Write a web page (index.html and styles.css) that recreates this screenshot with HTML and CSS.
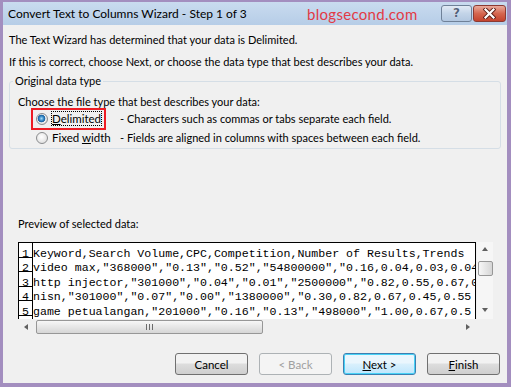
FILE: index.html
```html
<!DOCTYPE html>
<html lang="en">
<head>
    <meta charset="UTF-8">
    <title>Convert Text to Columns Wizard - Step 1 of 3</title>
    <link rel="stylesheet" href="styles.css">
</head>
<body>
    <div class="window">
        <div class="titlebar">
            <span class="title">Convert Text to Columns Wizard - Step 1 of 3</span>
            <span class="watermark">blogsecond.com</span>
            <div class="title-buttons">
                <div class="tb-btn help">?</div>
                <div class="tb-btn close">
                    <svg width="13" height="11" viewBox="0 0 13 11">
                        <path d="M2.5 1.5 L10.5 9.5 M10.5 1.5 L2.5 9.5" stroke="#5a1d16" stroke-width="4" stroke-linecap="square"/>
                        <path d="M2.5 1.5 L10.5 9.5 M10.5 1.5 L2.5 9.5" stroke="#fff" stroke-width="2.2" stroke-linecap="square"/>
                    </svg>
                </div>
            </div>
        </div>

        <div class="content">
            <p class="intro">The Text Wizard has determined that your data is Delimited.</p>
            <p class="intro">If this is correct, choose Next, or choose the data type that best describes your data.</p>

            <fieldset class="group">
                <legend>Original data type</legend>
                <p class="choose">Choose the file type that best describes your data:</p>
                <div class="option">
                    <div class="opt-box highlight">
                        <span class="radio checked"></span>
                        <span class="opt-label focused"><u>D</u>elimited</span>
                    </div>
                    <span class="opt-desc">- Characters such as commas or tabs separate each field.</span>
                </div>
                <div class="option">
                    <div class="opt-box">
                        <span class="radio"></span>
                        <span class="opt-label">Fixed <u>w</u>idth</span>
                    </div>
                    <span class="opt-desc">- Fields are aligned in columns with spaces between each field.</span>
                </div>
            </fieldset>

            <p class="preview-label">Preview of selected data:</p>

            <div class="preview-wrap">
                <div class="preview-main">
                    <div class="preview">
                        <div class="row"><span class="num">1</span><span class="data">Keyword,Search Volume,CPC,Competition,Number of Results,Trends</span></div>
                        <div class="row"><span class="num">2</span><span class="data">video max,"368000","0.13","0.52","54800000","0.16,0.04,0.03,0.04</span></div>
                        <div class="row"><span class="num">3</span><span class="data">http injector,"301000","0.04","0.01","2500000","0.82,0.55,0.67,0</span></div>
                        <div class="row"><span class="num">4</span><span class="data">nisn,"301000","0.07","0.00","1380000","0.30,0.82,0.67,0.45,0.55</span></div>
                        <div class="row"><span class="num">5</span><span class="data">game petualangan,"201000","0.16","0.13","498000","1.00,0.67,0.5</span></div>
                        <div class="row"><span class="num"></span><span class="data"></span></div>
                    </div>
                    <div class="hscroll">
                        <span class="arrow left"></span>
                        <div class="hthumb"><span class="grip"></span></div>
                        <span class="arrow right"></span>
                    </div>
                </div>
                <div class="vscroll">
                    <span class="arrow up"></span>
                    <div class="vthumb"></div>
                    <span class="arrow down"></span>
                </div>
            </div>

            <div class="buttons">
                <button class="btn">Cancel</button>
                <button class="btn" disabled>&lt; Back</button>
                <button class="btn default"><u>N</u>ext &gt;</button>
                <button class="btn"><u>F</u>inish</button>
            </div>
        </div>
    </div>
</body>
</html>
```

FILE: styles.css
```css
body {
    margin: 0;
    background: #a38ebf;
    font-family: Lato, "Noto Sans", sans-serif;
    font-size: 11px;
    color: #000;
}

.window {
    margin: 2px 4px 0 3px;
    width: 504px;
    height: 381px;
    background: #f0f0f0;
    display: flex;
    flex-direction: column;
}

/* title bar */
.titlebar {
    height: 23px;
    background: linear-gradient(#c9dbef, #b6cde7);
    display: flex;
    align-items: center;
    padding-left: 5px;
}

.title {
    width: 299px;
    font-size: 12px;
}

.watermark {
    color: #e23a45;
    font-size: 15px;
    letter-spacing: 0.3px;
}

.title-buttons {
    margin-left: auto;
    margin-right: 1px;
    margin-top: -1px;
    display: flex;
    gap: 1px;
}

.tb-btn {
    width: 31px;
    height: 17px;
    border: 1px solid #6f8198;
    border-radius: 3px;
    box-sizing: border-box;
    display: flex;
    align-items: center;
    justify-content: center;
}

.help {
    background: linear-gradient(#e1eaf5, #c3d4e8 50%, #b2c7e0);
    color: #53627a;
    font-family: "DejaVu Sans", sans-serif;
    font-weight: bold;
    font-size: 12px;
    text-shadow: 0 0 1px #fff;
}

.close {
    width: 33px;
    border-color: #8b3a33;
    background: linear-gradient(#e9aa9c, #d5664f 50%, #c4432e);
}

/* body */
.content {
    flex: 1;
    padding: 6px 6px 0;
    display: flex;
    flex-direction: column;
}

.intro {
    margin: 0 0 5px;
    line-height: 17px;
}

.group {
    margin: -2px 0 0;
    padding: 6px 0 1px 8px;
    border: 1px solid #d5dee6;
    border-radius: 3px;
    min-width: 0;
}

.group legend {
    line-height: 16px;
    padding: 0 2px;
    margin-left: -5px;
}

.choose {
    margin: 0;
    line-height: 14px;
}

.option {
    display: flex;
    align-items: center;
    height: 19px;
    white-space: nowrap;
}

.opt-box {
    display: flex;
    align-items: center;
    box-sizing: border-box;
    width: 75px;
    height: 22px;
    margin-left: 13px;
    margin-right: 14px;
    padding-left: 3px;
    border: 2px solid transparent;
    flex: none;
}

.opt-box.highlight {
    border-color: #ed1c24;
}

.radio {
    width: 12px;
    height: 12px;
    box-sizing: border-box;
    border-radius: 50%;
    border: 1px solid #8a8c8e;
    background: radial-gradient(circle at 45% 40%, #ffffff, #d8d8d8);
    margin-right: 4px;
    flex: none;
}

.radio.checked {
    background: radial-gradient(circle at 45% 45%, #a6dcf7 0, #2a7fc0 2.5px, #1b5f9c 3.5px, #f4f4f4 4.2px, #d6d6d6 6px);
}

.opt-label {
    font-size: 11.5px;
}

.opt-label.focused {
    outline: 1px dotted #000;
    outline-offset: 0;
}

.preview-label {
    margin: 67px 0 0 9px;
    line-height: 16px;
}

/* preview grid */
.preview-wrap {
    display: flex;
    margin: 10px 0 0 9px;
}

.preview-main {
    width: 458px;
}

.preview {
    height: 77px;
    box-sizing: border-box;
    border: 1px solid #000;
    border-bottom: none;
    overflow: hidden;
    background: #fff;
    font-family: "Liberation Mono", "Courier New", monospace;
    font-size: 11.6px;
}

.row {
    display: flex;
    height: 14.5px;
    white-space: nowrap;
}

.num, .data {
    box-sizing: border-box;
    padding-top: 5.5px;
    line-height: 9px;
}

.num {
    width: 14px;
    flex: none;
    text-align: center;
    border-right: 1px solid #000;
    border-bottom: 1px solid #000;
}

.hscroll {
    height: 15px;
    display: flex;
    align-items: center;
}

.hthumb {
    width: 227px;
    height: 14px;
    box-sizing: border-box;
    margin-left: 8px;
    border: 1px solid #979797;
    border-radius: 2px;
    background: linear-gradient(#f7f7f7, #e6e6e6 50%, #d6d6d6);
    display: flex;
    align-items: center;
    justify-content: center;
}

.grip {
    width: 5px;
    height: 6px;
    border-left: 1px solid #6b6b6b;
    border-right: 1px solid #6b6b6b;
    background: linear-gradient(90deg, transparent 2px, #6b6b6b 2px, #6b6b6b 3px, transparent 3px);
}

.arrow {
    width: 0;
    height: 0;
    border: 0 solid transparent;
    flex: none;
}

.arrow.left {
    border-width: 3.5px 4px 3.5px 0;
    border-right-color: #606060;
    margin-left: 6px;
}

.arrow.right {
    border-width: 3.5px 0 3.5px 4px;
    border-left-color: #606060;
    margin-left: auto;
    margin-right: 6px;
}

.vscroll {
    width: 16px;
    height: 77px;
    margin-left: 1px;
    background: #f6f6f6;
    display: flex;
    flex-direction: column;
    align-items: center;
}

.arrow.up {
    border-width: 0 3.5px 4px;
    border-bottom-color: #606060;
    margin-top: 5px;
}

.arrow.down {
    border-width: 4px 3.5px 0;
    border-top-color: #606060;
    margin-top: auto;
    margin-bottom: 7px;
}

.vthumb {
    width: 15px;
    height: 15px;
    box-sizing: border-box;
    margin-top: 10px;
    border: 1px solid #979797;
    border-radius: 2px;
    background: linear-gradient(90deg, #f7f7f7, #e6e6e6 50%, #d6d6d6);
}

/* dialog buttons */
.buttons {
    display: flex;
    justify-content: flex-end;
    gap: 11px;
    margin: 19px 1px 0 0;
}

.btn {
    width: 73px;
    height: 22px;
    padding: 0;
    border: 1px solid #707070;
    border-radius: 3px;
    background: linear-gradient(#f2f2f2 45%, #dddddd 50%, #cfcfcf);
    font-family: Lato, "Noto Sans", sans-serif;
    font-size: 11.5px;
    color: #000;
}

.btn:disabled {
    border-color: #adb2b5;
    background: #f4f4f4;
    color: #a0a0a0;
}

.btn.default {
    border-color: #3c7fb1;
    box-shadow: inset 0 0 0 1px #48d2f6;
    background: linear-gradient(#eaf6fd 45%, #d9f0fc 50%, #bee6fd);
}
```
